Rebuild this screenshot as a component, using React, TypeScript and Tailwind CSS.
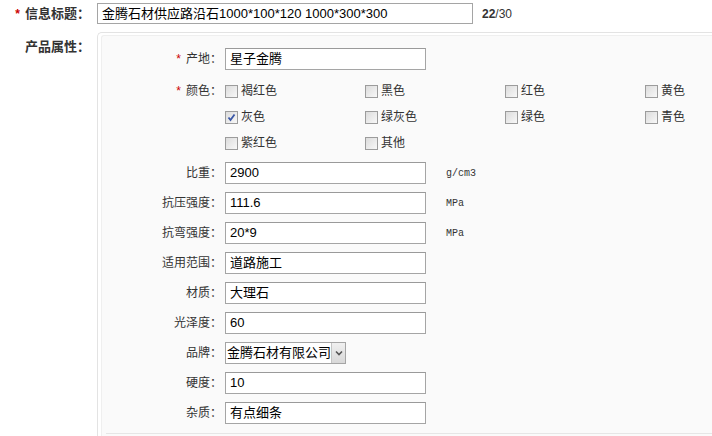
import React from 'react';

const font = 'font-["Liberation_Sans","Noto_Sans_CJK_SC",sans-serif]';

const Star = () => <span className="mr-[5px] text-[12px] text-[#c00]">*</span>;

const TextInput: React.FC<{ value: string; width?: string }> = ({ value, width = 'w-[201px]' }) => (
    <div className={`${width} shrink-0 h-[22px] border border-[#a5a5a5] border-t-[#9a9a9a] bg-white pl-[4px] flex items-center text-[13px] text-black`}>
        {value}
    </div>
);

const Checkbox: React.FC<{ label: string; checked?: boolean }> = ({ label, checked }) => (
    <div className="flex items-center h-[26px]">
        <span className="relative w-[13px] h-[13px] border border-[#9c9c9c] bg-gradient-to-br from-[#dcdcdc] to-[#f8f8f8] flex items-center justify-center">
            {checked && (
                <svg viewBox="0 0 11 11" className="w-[11px] h-[11px]">
                    <path d="M2.5 5.5 L4.5 8 L8.5 2.5" fill="none" stroke="#3a57a7" strokeWidth="1.8" />
                </svg>
            )}
        </span>
        <span className="ml-[3px] text-[12px] text-[#333]">{label}</span>
    </div>
);

const Row: React.FC<{ label: string; required?: boolean; children: React.ReactNode }> = ({ label, required, children }) => (
    <div className="flex items-center h-[30px]">
        <div className="w-[123px] shrink-0 pr-[3px] text-right text-[12px] text-[#333] flex justify-end items-center whitespace-nowrap">
            {required && <Star />}
            {label}：
        </div>
        {children}
    </div>
);

const Unit: React.FC<{ text: string }> = ({ text }) => (
    <span className='ml-[20px] text-[10px] text-[#333] font-["Liberation_Mono",monospace]'>{text}</span>
);

const colors = [
    ['褐红色', false], ['黑色', false], ['红色', false], ['黄色', false],
    ['灰色', true], ['绿灰色', false], ['绿色', false], ['青色', false],
    ['紫红色', false], ['其他', false],
] as const;

export default function App() {
    return (
        <div className={`${font} w-[712px] h-[436px] bg-white overflow-hidden`}>
            <div className="flex items-center pt-[3px] h-[24px]">
                <div className="w-[90px] shrink-0 flex justify-end items-center text-[13px] font-bold text-[#333] whitespace-nowrap">
                    <Star />信息标题：
                </div>
                <div className="ml-[7px] w-[376px] shrink-0 h-[21px] border border-[#a5a5a5] bg-white pl-[4px] flex items-center text-[13px] text-black">
                    金腾石材供应路沿石1000*100*120 1000*300*300
                </div>
                <div className="ml-[9px] text-[12px] text-[#333]">
                    <span className="font-bold">22</span>/30
                </div>
            </div>

            <div className="flex mt-[8px]">
                <div className="w-[90px] shrink-0 pt-[5px] text-right text-[13px] font-bold text-[#333] whitespace-nowrap">产品属性：</div>
                <div className="ml-[7px] flex-1 border-l border-t border-[#e3e3e3] rounded-tl-[5px] pl-[3px] pt-[2px]">
                    <div className="border-l border-t border-[#efefef] rounded-tl-[3px] bg-[#fafafa] pt-[8px] pb-[4px]">
                        <Row label="产地" required>
                            <TextInput value="星子金腾" />
                        </Row>

                        <div className="flex mt-[4px] mb-[2px]">
                            <div className="w-[123px] shrink-0 pr-[3px] h-[26px] flex justify-end items-center text-[12px] text-[#333] whitespace-nowrap">
                                <Star />颜色：
                            </div>
                            <div className="grid grid-cols-[140px_140px_140px_140px] shrink-0">
                                {colors.map(([name, checked]) => (
                                    <Checkbox key={name} label={name} checked={checked} />
                                ))}
                            </div>
                        </div>

                        <Row label="比重"><TextInput value="2900" /><Unit text="g/cm3" /></Row>
                        <Row label="抗压强度"><TextInput value="111.6" /><Unit text="MPa" /></Row>
                        <Row label="抗弯强度"><TextInput value="20*9" /><Unit text="MPa" /></Row>
                        <Row label="适用范围"><TextInput value="道路施工" /></Row>
                        <Row label="材质"><TextInput value="大理石" /></Row>
                        <Row label="光泽度"><TextInput value="60" /></Row>
                        <Row label="品牌">
                            <div className="w-[121px] shrink-0 h-[22px] border border-[#a5a5a5] bg-white flex items-stretch">
                                <div className="flex-1 pl-[1px] flex items-center text-[13px] text-black whitespace-nowrap">金腾石材有限公司</div>
                                <div className="w-[15px] border-l border-[#c4c4c4] bg-gradient-to-b from-[#f0f0f0] to-[#d8d8d8] flex items-center justify-center">
                                    <svg viewBox="0 0 8 6" className="w-[8px] h-[6px]">
                                        <path d="M1 1.5 L4 4.5 L7 1.5" fill="none" stroke="#555" strokeWidth="1.6" />
                                    </svg>
                                </div>
                            </div>
                        </Row>
                        <Row label="硬度"><TextInput value="10" /></Row>
                        <Row label="杂质"><TextInput value="有点细条" /></Row>
                        <div className="mt-[5px] ml-[4px] border-t border-[#e6e6e6]" />
                    </div>
                </div>
            </div>
        </div>
    );
}
